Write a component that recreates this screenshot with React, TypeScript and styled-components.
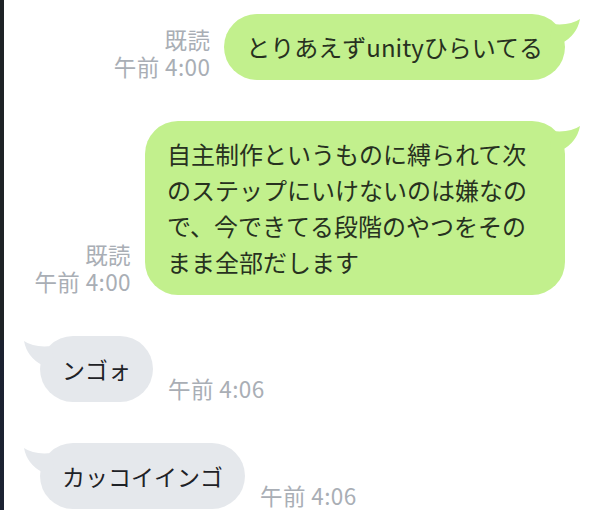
import React from "react";
import styled, { createGlobalStyle } from "styled-components";

const GlobalStyle = createGlobalStyle`
  html, body {
    margin: 0;
    padding: 0;
    background: #ffffff;
  }
  body {
    font-family: "Noto Sans CJK JP", "Noto Sans", sans-serif;
  }
`;

const Page = styled.div`
  display: flex;
  width: 590px;
  height: 510px;
  overflow: hidden;
  background: #ffffff;
`;

const Strip = styled.div`
  width: 4px;
  flex: none;
  background: linear-gradient(to bottom, #1e2226 0, #1e2226 340px, #1b2130 340px, #1c2232 100%);
`;

const Chat = styled.div`
  flex: 1;
  display: flex;
  flex-direction: column;
  gap: 41px;
  padding-top: 14px;
`;

const Row = styled.div<{ $side: "sent" | "received" }>`
  display: flex;
  align-items: flex-end;
  justify-content: ${(p) => (p.$side === "sent" ? "flex-end" : "flex-start")};
  gap: ${(p) => (p.$side === "sent" ? "14px" : "15px")};
  padding-right: ${(p) => (p.$side === "sent" ? "25px" : "0")};
  padding-left: ${(p) => (p.$side === "sent" ? "0" : "36px")};
`;

const Meta = styled.div`
  display: flex;
  flex-direction: column;
  align-items: flex-end;
  font-size: 22.5px;
  line-height: 27px;
  letter-spacing: 0.4px;
  color: #a9aeb5;
  white-space: nowrap;
`;

const MetaLine = styled.span`
  display: block;
  height: 27px;
`;

const Time = styled.div`
  font-size: 22.5px;
  line-height: 27px;
  letter-spacing: 0.4px;
  color: #a9aeb5;
  white-space: nowrap;
`;

const Bubble = styled.div<{ $side: "sent" | "received" }>`
  position: relative;
  box-sizing: border-box;
  max-width: 420px;
  padding: 15px 22px;
  border-radius: 33px;
  font-size: ${(p) => (p.$side === "sent" ? "24px" : "23px")};
  line-height: 36px;
  background: ${(p) => (p.$side === "sent" ? "#c2f08d" : "#e5e8ec")};
  color: ${(p) => (p.$side === "sent" ? "#27311f" : "#1e2227")};
`;

const Tail = styled.svg<{ $side: "sent" | "received" }>`
  position: absolute;
  top: 0;
  width: 30px;
  height: 34px;
  ${(p) => (p.$side === "sent" ? "right: -15px;" : "left: -16px;")}
`;

const BubbleTail: React.FC<{ side: "sent" | "received"; color: string }> = ({ side, color }) => (
  <Tail $side={side} viewBox="0 0 30 34">
    {side === "sent" ? (
      <path d="M2 10 Q20 12 30 5 Q27 21 12 29 L0 29 Z" fill={color} />
    ) : (
      <path d="M28 10 Q10 12 0 5 Q3 21 18 29 L30 29 Z" fill={color} />
    )}
  </Tail>
);

export default function App() {
  return (
    <>
      <GlobalStyle />
      <Page>
        <Strip />
        <Chat>
          <Row $side="sent">
            <Meta>
              <MetaLine>既読</MetaLine>
              <MetaLine>午前 4:00</MetaLine>
            </Meta>
            <Bubble $side="sent">
              とりあえずunityひらいてる
              <BubbleTail side="sent" color="#c2f08d" />
            </Bubble>
          </Row>
          <Row $side="sent">
            <Meta>
              <MetaLine>既読</MetaLine>
              <MetaLine>午前 4:00</MetaLine>
            </Meta>
            <Bubble $side="sent">
              自主制作というものに縛られて次のステップにいけないのは嫌なので、今できてる段階のやつをそのまま全部だします
              <BubbleTail side="sent" color="#c2f08d" />
            </Bubble>
          </Row>
          <Row $side="received">
            <Bubble $side="received">
              ンゴォ
              <BubbleTail side="received" color="#e5e8ec" />
            </Bubble>
            <Time>午前 4:06</Time>
          </Row>
          <Row $side="received">
            <Bubble $side="received">
              カッコイインゴ
              <BubbleTail side="received" color="#e5e8ec" />
            </Bubble>
            <Time>午前 4:06</Time>
          </Row>
        </Chat>
      </Page>
    </>
  );
}
